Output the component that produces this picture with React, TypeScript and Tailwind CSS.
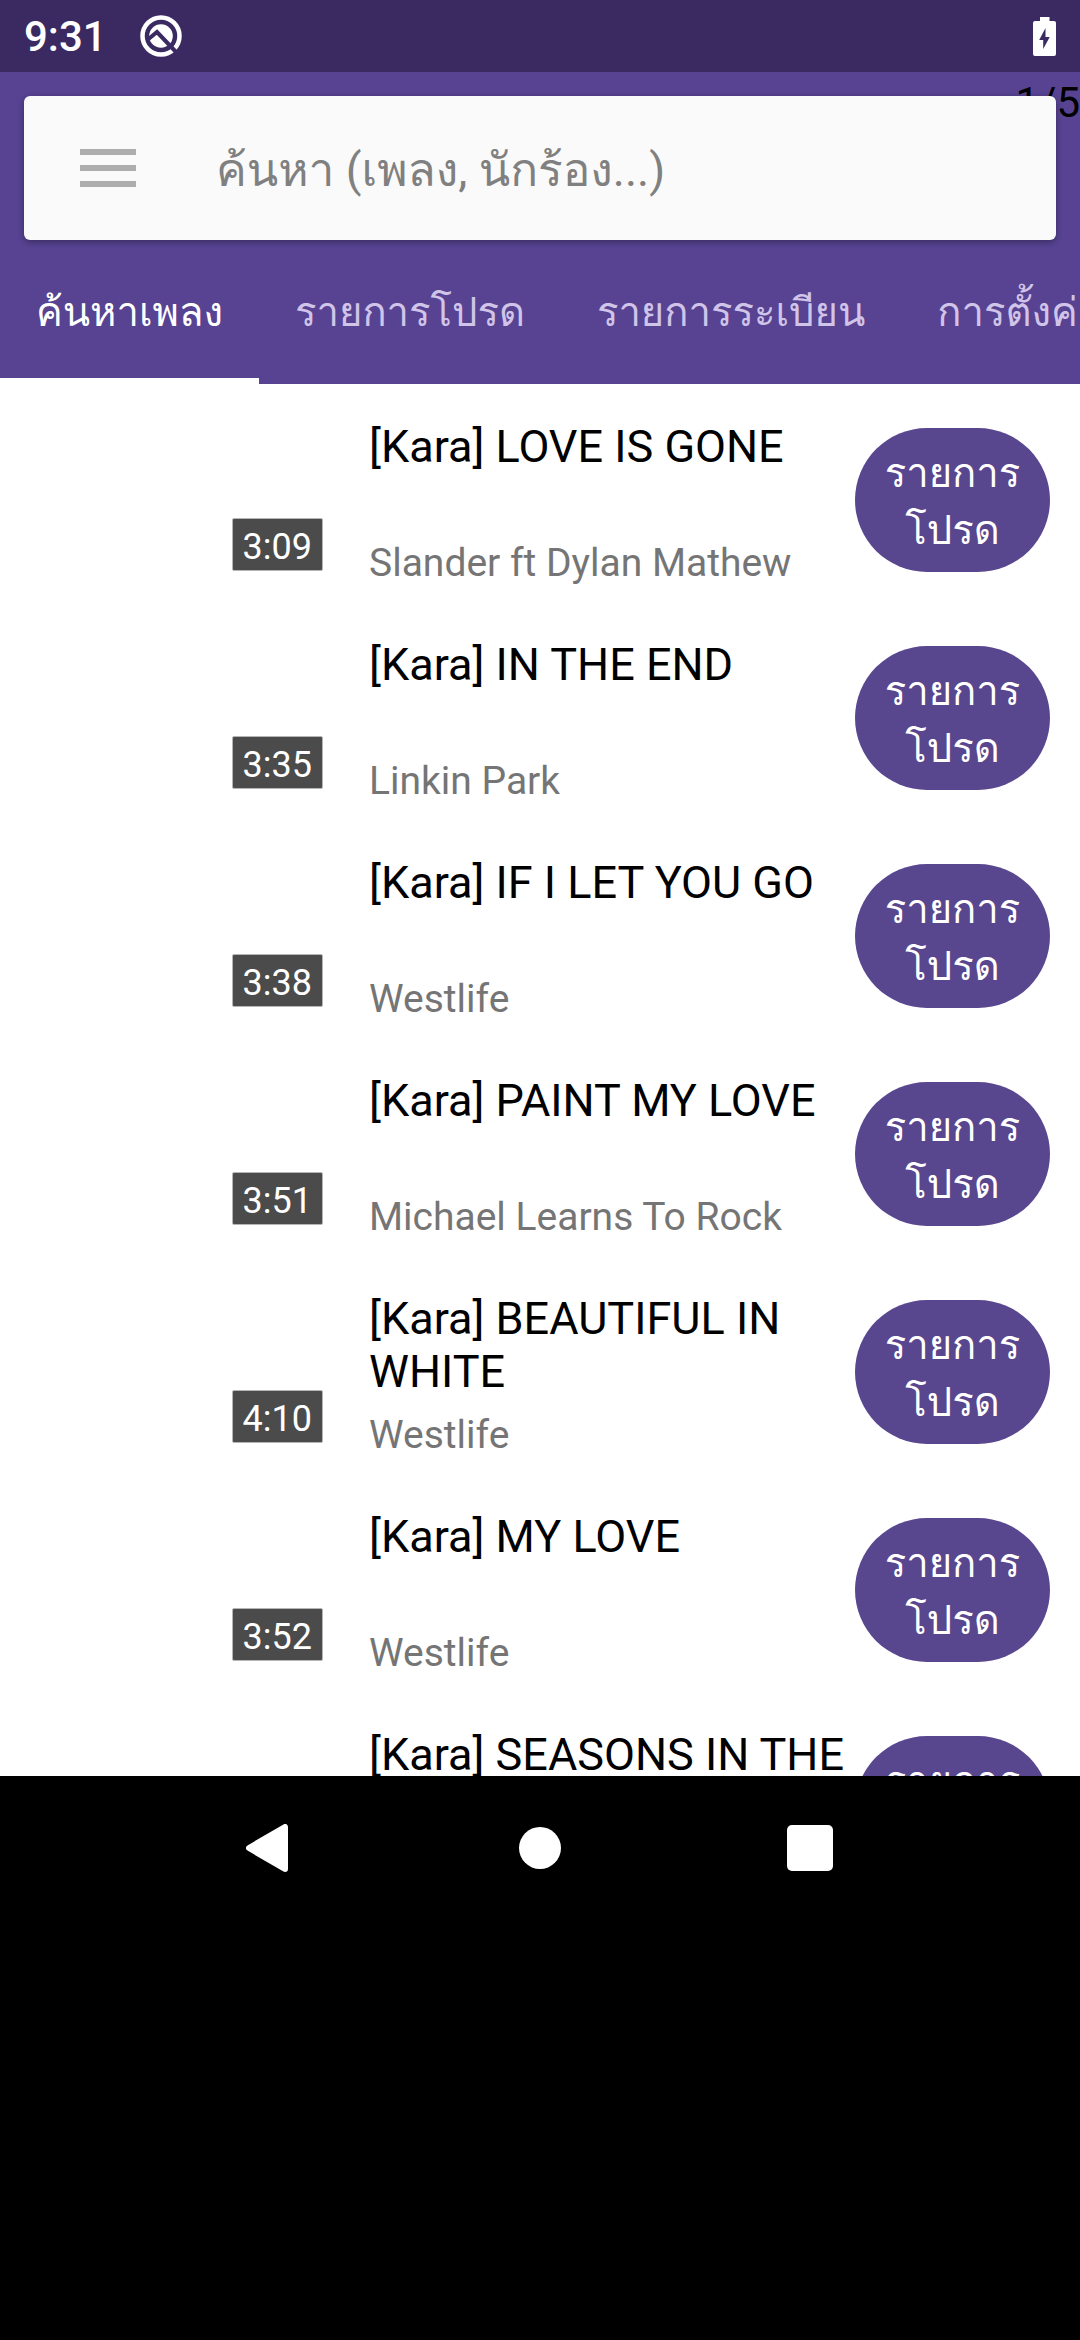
type Song = { title: string; artist?: string; time?: string };

const songs: Song[] = [
  { title: '[Kara] LOVE IS GONE', artist: 'Slander ft Dylan Mathew', time: '3:09' },
  { title: '[Kara] IN THE END', artist: 'Linkin Park', time: '3:35' },
  { title: '[Kara] IF I LET YOU GO', artist: 'Westlife', time: '3:38' },
  { title: '[Kara] PAINT MY LOVE', artist: 'Michael Learns To Rock', time: '3:51' },
  { title: '[Kara] BEAUTIFUL IN WHITE', artist: 'Westlife', time: '4:10' },
  { title: '[Kara] MY LOVE', artist: 'Westlife', time: '3:52' },
  { title: '[Kara] SEASONS IN THE' },
];

const tabs = ['ค้นหาเพลง', 'รายการโปรด', 'รายการระเบียน', 'การตั้งค่า'];

function StatusBar() {
  return (
    <div className="flex h-[72px] shrink-0 items-center bg-[#3a2a61] px-6 text-white">
      <span className="pt-[2px] text-[42px] leading-[50px] font-medium">9:31</span>
      <svg className="ml-8 h-[44px] w-[44px]" viewBox="0 0 44 44" aria-hidden="true">
        <circle cx="22" cy="22" r="18.500" fill="none" stroke="#fff" strokeWidth="4.500" />
        <circle cx="22" cy="22" r="11.800" fill="#fff" />
        <path d="M9.500 25 L18 18 L37 38" fill="none" stroke="#3a2a61" strokeWidth="4" />
      </svg>
      <svg className="ml-auto h-[39px] w-[23px]" viewBox="0 0 23 39" aria-hidden="true">
        <path
          fill="#fff"
          fillRule="evenodd"
          d="M7 0h9.500v4h4.500a2 2 0 0 1 2 2v31a2 2 0 0 1-2 2H2a2 2 0 0 1-2-2V6a2 2 0 0 1 2-2h5zM12.500 11L6.200 23h4v9l6.500-12h-4.200z"
        />
      </svg>
    </div>
  );
}

function Header() {
  return (
    <header className="relative shrink-0 bg-[#574392] pt-6">
      <span className="absolute top-[6px] right-0 text-[42px] leading-[50px] text-black">1/5</span>
      <div className="relative mx-6 flex h-[144px] items-center rounded-[6px] bg-[#fafafa] pl-[56px] shadow-[0_2px_6px_rgba(0,0,0,0.35)]">
        <button type="button" aria-label="เมนู" className="flex w-[56px] flex-col gap-[10px]">
          <span className="h-[6px] w-full bg-[#adadad]" />
          <span className="h-[6px] w-full bg-[#adadad]" />
          <span className="h-[6px] w-full bg-[#adadad]" />
        </button>
        <input
          type="text"
          aria-label="ค้นหา"
          placeholder="ค้นหา (เพลง, นักร้อง...)"
          className="ml-20 min-w-0 flex-1 bg-transparent pt-1 text-[46px] leading-[72px] text-black outline-none placeholder:text-[#808080]"
        />
      </div>
      <nav className="flex h-[144px] overflow-hidden" role="tablist">
        {tabs.map((tab, i) => (
          <button
            key={tab}
            type="button"
            role="tab"
            aria-selected={i === 0}
            className={
              i === 0
                ? 'shrink-0 border-b-[6px] border-white px-9 pt-2 text-[40px] whitespace-nowrap text-white'
                : 'shrink-0 border-b-[6px] border-transparent px-9 pt-2 text-[40px] whitespace-nowrap text-[#d1c4e9]'
            }
          >
            {tab}
          </button>
        ))}
      </nav>
    </header>
  );
}

function SongRow({ title, artist, time }: Song) {
  return (
    <li className="flex h-[218px] items-center pr-[30px]">
      <div className="flex h-[156px] w-[323px] shrink-0 items-end justify-end">
        {time && (
          <span className="mb-[7px] rounded-[2px] border border-[#b5b5b5] bg-[#4b4b4b] px-[10px] pt-[7px] pb-[2px] text-[36px] leading-[42px] text-white">
            {time}
          </span>
        )}
      </div>
      <div className="ml-[46px] flex h-[170px] min-w-0 flex-1 flex-col gap-[14px] pt-[5px]">
        <h2 className="h-[106px] shrink-0 text-[45px] leading-[53px] text-black">{title}</h2>
        {artist && <p className="truncate text-[39px] leading-[46px] text-[#757575]">{artist}</p>}
      </div>
      <button
        type="button"
        className="h-[144px] w-[195px] shrink-0 rounded-full bg-[#58468e] pt-1 text-[40px] leading-[57px] text-white"
      >
        <span className="block">รายการ</span>
        <span className="block">โปรด</span>
      </button>
    </li>
  );
}

function SystemNav() {
  return (
    <footer className="h-[564px] shrink-0 bg-black px-[12.5%]">
      <div className="grid h-[144px] grid-cols-3">
        <button type="button" aria-label="Back" className="flex items-center justify-center">
          <svg className="h-12 w-12" viewBox="0 0 48 48" aria-hidden="true">
            <path d="M3 24L39 3V45z" fill="#fff" stroke="#fff" strokeWidth="6" strokeLinejoin="round" />
          </svg>
        </button>
        <button type="button" aria-label="Home" className="flex items-center justify-center">
          <span className="h-[42px] w-[42px] rounded-full bg-white" />
        </button>
        <button type="button" aria-label="Recents" className="flex items-center justify-center">
          <span className="h-[46px] w-[46px] rounded-[5px] bg-white" />
        </button>
      </div>
    </footer>
  );
}

export default function App() {
  return (
    <div className="flex h-screen flex-col bg-black font-[Roboto,Loma,'Noto_Sans',sans-serif]">
      <StatusBar />
      <Header />
      <main className="min-h-0 flex-1 overflow-hidden bg-white pt-[7px]">
        <ul>
          {songs.map((song) => (
            <SongRow key={song.title} {...song} />
          ))}
        </ul>
      </main>
      <SystemNav />
    </div>
  );
}
